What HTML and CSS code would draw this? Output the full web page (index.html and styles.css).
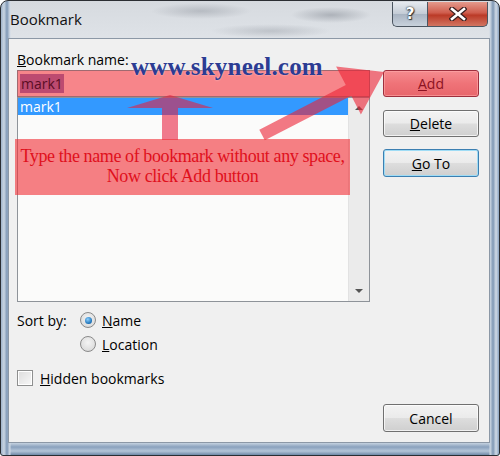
FILE: index.html
```html
<!DOCTYPE html>
<html lang="en">
    <head>
        <meta charset="UTF-8" />
        <title>Bookmark</title>
        <link rel="stylesheet" href="styles.css">
    </head>
    <body>
        <div class="window">
            <!-- title bar -->
            <div class="titlebar">
                <span class="title">Bookmark</span>
                <div class="caption">
                    <span class="cap-btn help">?</span>
                    <span class="cap-btn close">
                        <svg width="18" height="14" viewBox="0 0 18 14">
                            <path d="M3 2 L15 12 M15 2 L3 12" stroke="#3a2020" stroke-width="5" stroke-linecap="square" fill="none" />
                            <path d="M3 2 L15 12 M15 2 L3 12" stroke="#ffffff" stroke-width="2.6" stroke-linecap="square" fill="none" />
                        </svg>
                    </span>
                </div>
            </div>

            <!-- dialog body -->
            <div class="client">
                <div class="left">
                    <div class="label"><u>B</u>ookmark name:</div>
                    <div class="name-input"><span class="sel">mark1</span></div>
                    <div class="list">
                        <div class="rows">
                            <div class="row selected">mark1</div>
                        </div>
                        <div class="scrollbar">
                            <span class="arrow up"></span>
                            <span class="arrow down"></span>
                        </div>
                    </div>
                    <div class="sort">
                        <span class="sort-label">Sort by:</span>
                        <span class="option"><span class="radio checked"></span><span><u>N</u>ame</span></span>
                        <span></span>
                        <span class="option"><span class="radio"></span><span><u>L</u>ocation</span></span>
                    </div>
                    <div class="option hidden-row"><span class="checkbox"></span><span><u>H</u>idden bookmarks</span></div>
                </div>
                <div class="right">
                    <button class="btn add"><u>A</u>dd</button>
                    <button class="btn"><u>D</u>elete</button>
                    <button class="btn default"><u>G</u>o To</button>
                    <button class="btn cancel">Cancel</button>
                </div>
            </div>

            <!-- annotation drawn over the dialog -->
            <svg class="marks" width="500" height="456" viewBox="0 0 500 456">
                <path d="M162 140 L162 108 L127 108 L170 95 L213 108 L178 108 L178 140 Z" fill="rgba(232,30,60,0.58)" />
                <path d="M259.3 129.7 L345.8 85.1 L336.1 66.4 L384 72 L360.9 114.4 L351.3 95.7 L264.8 140.3 Z" fill="rgba(236,34,52,0.6)" />
            </svg>
            <div class="note">Type the name of bookmark without any space,<br>Now click Add button</div>
            <div class="site">www.skyneel.com</div>
        </div>
    </body>
</html>
```

FILE: styles.css
```css
body {
    margin: 0;
    background: #ffffff;
    font-family: 'Open Sans', 'Noto Sans', sans-serif;
    font-size: 14px;
    color: #000;
}

.window {
    position: relative;
    width: 500px;
    height: 456px;
    box-sizing: border-box;
    border: 1px solid #2b2e33;
    border-radius: 8px 8px 3px 3px;
    display: flex;
    flex-direction: column;
    overflow: hidden;
    background:
        radial-gradient(ellipse 40px 8px at 330px 14px, rgba(120, 126, 136, 0.45), transparent),
        radial-gradient(ellipse 50px 8px at 200px 10px, rgba(120, 126, 136, 0.35), transparent),
        radial-gradient(ellipse 60px 7px at 270px 30px, rgba(120, 126, 136, 0.3), transparent),
        linear-gradient(90deg, #9fb3ca 0px, #c9d5e2 3px, #7f98b6 6px, #d2dbe6 9px, transparent 10px),
        linear-gradient(270deg, #8aa3c0 0px, #d0dae6 3px, #7e97b4 6px, #cfd9e4 9px, transparent 10px),
        linear-gradient(0deg, #6f89a8 0px, #b4c5d8 4px, #8aa1bd 8px, #c5d2e0 12px, transparent 13px),
        linear-gradient(#d6dadf, #dfe3e8 40px, #cfd8e3);
}

/* title bar */
.titlebar {
    height: 37px;
    flex: none;
    display: flex;
    justify-content: space-between;
    align-items: flex-start;
}

.title {
    margin: 8px 0 0 9px;
    font-size: 15px;
    color: #111;
}

.caption {
    display: flex;
    margin: 1px 11px 0 0;
}

.cap-btn {
    height: 25px;
    box-sizing: border-box;
    border: 1px solid #4b5560;
    border-top: none;
    display: flex;
    align-items: center;
    justify-content: center;
}

.help {
    width: 35px;
    border-radius: 0 0 0 5px;
    border-right: none;
    background: linear-gradient(#e6eaef, #c3cbd5 50%, #a9b4c2 51%, #c9d2dc);
    font-family: 'DejaVu Sans', sans-serif;
    font-weight: bold;
    font-size: 15px;
    color: #fff;
    text-shadow: 0 0 1px #333, 0 0 2px #333, 1px 1px 1px #333;
}

.close {
    width: 61px;
    border-radius: 0 0 5px 0;
    background: linear-gradient(#e49a8c, #cf5d4d 45%, #bb3a27 55%, #d27561);
}

/* client area */
.client {
    flex: 1;
    margin: 0 9px 12px 7px;
    border: 1px solid #8c98a6;
    background: #f0f0f0;
    display: flex;
    gap: 13px;
    padding: 11px 10px 10px 8px;
}

.left {
    width: 353px;
    display: flex;
    flex-direction: column;
}

.label {
    line-height: 19px;
    margin-bottom: 1px;
}

.name-input {
    height: 27px;
    box-sizing: border-box;
    border: 1px solid #a06a70;
    background: #f7858a;
    padding: 3px 2px;
    display: flex;
    align-items: center;
}

.sel {
    background: #bd4a70;
    color: #5a0d24;
    line-height: 19px;
    padding: 0 1px;
}

.list {
    height: 205px;
    box-sizing: border-box;
    border: 1px solid #8e9399;
    background: #fbfbfa;
    display: flex;
}

.rows {
    flex: 1;
}

.row {
    height: 17px;
    line-height: 17px;
    padding-left: 2px;
}

.row.selected {
    background: #3399ff;
    color: #fff;
}

.scrollbar {
    width: 20px;
    background: #ebebeb;
    border-left: 1px solid #e2e2e2;
    display: flex;
    flex-direction: column;
    justify-content: space-between;
    align-items: center;
    padding: 8px 0 8px;
}

.arrow {
    width: 0;
    height: 0;
    border-left: 4px solid transparent;
    border-right: 4px solid transparent;
}

.arrow.up {
    border-bottom: 4px solid #555;
}

.arrow.down {
    border-top: 4px solid #555;
}

/* sort options */
.sort {
    margin-top: 6px;
    display: grid;
    grid-template-columns: 63px auto;
    grid-auto-rows: 24px;
    align-items: center;
}

.option {
    display: flex;
    align-items: center;
    gap: 6px;
}

.radio {
    width: 14px;
    height: 14px;
    border-radius: 50%;
    border: 1px solid #8a8a8a;
    background: radial-gradient(circle at 50% 40%, #f4f4f4, #d4d4d4);
    display: flex;
    align-items: center;
    justify-content: center;
}

.radio.checked::after {
    content: "";
    width: 7px;
    height: 7px;
    border-radius: 50%;
    background: radial-gradient(circle at 40% 35%, #8cd0ff, #1a6fb5 70%, #0c4d8a);
}

.hidden-row {
    margin-top: 12px;
    height: 20px;
    gap: 7px;
}

.checkbox {
    width: 14px;
    height: 14px;
    border: 1px solid #8e8f8f;
    background: linear-gradient(135deg, #dcdcdc, #f8f8f8);
    box-shadow: inset 0 0 0 1px #fff;
}

/* buttons */
.right {
    width: 96px;
    display: flex;
    flex-direction: column;
}

.btn {
    height: 27px;
    margin-bottom: 13px;
    border: 1px solid #707070;
    border-radius: 3px;
    background: linear-gradient(#f3f3f3, #ebebeb 48%, #dddddd 52%, #cfcfcf);
    box-shadow: inset 0 0 0 1px rgba(255, 255, 255, 0.7);
    font-family: 'Open Sans', 'Noto Sans', sans-serif;
    font-size: 14px;
    color: #000;
    padding: 0;
}

.btn:first-child {
    margin-top: 20px;
}

.btn.add {
    border-color: #9e2f3d;
    background: linear-gradient(#f58b8f, #ef7378 50%, #e8666c);
    box-shadow: inset 0 0 0 1px rgba(255, 170, 170, 0.6);
    color: #8c1222;
}

.btn.default {
    height: 28px;
    margin-top: -1px;
    border-color: #3c7fb1;
    box-shadow: inset 0 0 0 1px #9fdcf5;
}

.btn.cancel {
    height: 28px;
    margin: auto 0 0;
}

/* annotation overlay */
.marks {
    position: absolute;
    left: -1px;
    top: -1px;
    pointer-events: none;
}

.note {
    position: absolute;
    left: 14px;
    top: 138px;
    width: 335px;
    height: 56px;
    box-sizing: border-box;
    padding-top: 7px;
    background: rgba(242, 45, 52, 0.6);
    text-align: center;
    font-family: 'Liberation Serif', serif;
    font-size: 18px;
    letter-spacing: -0.4px;
    line-height: 20px;
    color: #e0101c;
}

.site {
    position: absolute;
    left: 130px;
    top: 52px;
    font-family: 'Liberation Serif', serif;
    font-weight: bold;
    font-size: 25px;
    letter-spacing: 0.2px;
    color: #2c3c93;
    text-shadow: 0 0 2px rgba(255, 255, 255, 0.6);
}
```
